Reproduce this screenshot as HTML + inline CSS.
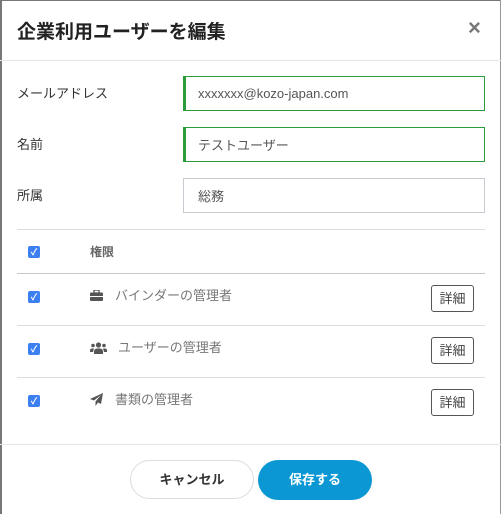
<!DOCTYPE html>
<html><head><meta charset="utf-8"><style>
*{box-sizing:border-box;margin:0;padding:0}
body{width:501px;height:514px;background:#fff;font-family:"Liberation Sans","Noto Sans CJK JP",sans-serif;position:relative;overflow:hidden}
.a{position:absolute}
.t{left:17px;top:17px;font-size:19px;font-weight:bold;color:#222}
.x{left:468px;top:15px;font-size:22px;font-weight:bold;color:#777}
.hr{position:absolute;height:1px;background:#ddd}
.lbl{left:17px;font-size:13px;color:#333}
.in{left:183px;width:302px;height:35px;border:1px solid #2a9d3a;border-left:3px solid #2a9d3a;font-size:13px;color:#555;padding:9px 0 0 12px}
.in.g{border:1px solid #c8ccd2;padding-left:14px}
.cb{left:28px;width:12px;height:12px;background:#3b7ff0;border-radius:2px;color:#fff;font-size:9px;line-height:12px;text-align:center;font-weight:bold}
.txt{font-size:13px;color:#777}
.btn{left:431px;width:43px;height:27px;border:1px solid #555;border-radius:3px;font-size:13px;color:#444;text-align:center;line-height:25px}
</style></head><body>
<div class="a" style="left:0;top:0;width:2px;height:514px;background:#777"></div>
<div class="a" style="left:0;top:0;width:501px;height:1px;background:#777"></div>
<div class="a" style="right:0;top:0;width:1px;height:514px;background:#999"></div>
<div class="a t">企業利用ユーザーを編集</div>
<div class="a x">×</div>
<div class="hr" style="left:0;right:0;top:60px;background:#e6e6e6"></div>
<div class="a lbl" style="top:83px">メールアドレス</div>
<div class="a in" style="top:76px">xxxxxxx@kozo-japan.com</div>
<div class="a lbl" style="top:134px">名前</div>
<div class="a in" style="top:127px;padding-top:7px">テストユーザー</div>
<div class="a lbl" style="top:185px">所属</div>
<div class="a in g" style="top:178px;padding-top:7px">総務</div>
<div class="hr" style="left:17px;width:468px;top:229px"></div>
<div class="a cb" style="top:246px">✓</div>
<div class="a" style="left:90px;top:243px;font-size:12px;font-weight:bold;color:#666">権限</div>
<div class="hr" style="left:17px;width:468px;top:273px;background:#c8c8c8"></div>
<div class="a cb" style="top:291px">✓</div>
<svg class="a" style="left:90px;top:290px" width="13" height="11" viewBox="0 0 13 11"><rect x="4" y="0" width="5" height="3" fill="none" stroke="#555" stroke-width="1.3"/><rect x="0" y="2.5" width="13" height="8.5" rx="1" fill="#555"/><rect x="0" y="6" width="13" height="1" fill="#fff"/></svg>
<div class="a txt" style="left:115px;top:285px">バインダーの管理者</div>
<div class="a btn" style="top:285px">詳細</div>
<div class="hr" style="left:17px;width:468px;top:325px"></div>
<div class="a cb" style="top:343px">✓</div>
<svg class="a" style="left:90px;top:342px" width="17" height="12" viewBox="0 0 17 12"><circle cx="8.5" cy="3" r="2.6" fill="#555"/><circle cx="3" cy="3.5" r="1.8" fill="#555"/><circle cx="14" cy="3.5" r="1.8" fill="#555"/><path d="M4 12v-2.5a3 3 0 0 1 3-3h3a3 3 0 0 1 3 3V12z" fill="#555"/><path d="M0 10v-1.5a2 2 0 0 1 2-2h2l-1 3.5z M17 10v-1.5a2 2 0 0 0-2-2h-2l1 3.5z" fill="#555"/></svg>
<div class="a txt" style="left:118px;top:337px">ユーザーの管理者</div>
<div class="a btn" style="top:337px">詳細</div>
<div class="hr" style="left:17px;width:468px;top:377px"></div>
<div class="a cb" style="top:395px">✓</div>
<svg class="a" style="left:90px;top:393px" width="13" height="13" viewBox="0 0 13 13"><path d="M13 0L0 6l4 1.5L11 2 5.5 8.5V13l2.5-3.5 3 1.5z" fill="#555"/></svg>
<div class="a txt" style="left:115px;top:389px">書類の管理者</div>
<div class="a btn" style="top:389px">詳細</div>
<div class="hr" style="left:0;right:0;top:444px;background:#e6e6e6"></div>
<div class="a" style="left:130px;top:460px;width:124px;height:39px;border:1px solid #ddd;border-radius:20px;text-align:center;line-height:37px;font-size:13px;font-weight:bold;color:#333">キャンセル</div>
<div class="a" style="left:258px;top:460px;width:114px;height:40px;background:#0a97d4;border-radius:20px;text-align:center;line-height:40px;font-size:13px;font-weight:bold;color:#fff">保存する</div>
</body></html>
